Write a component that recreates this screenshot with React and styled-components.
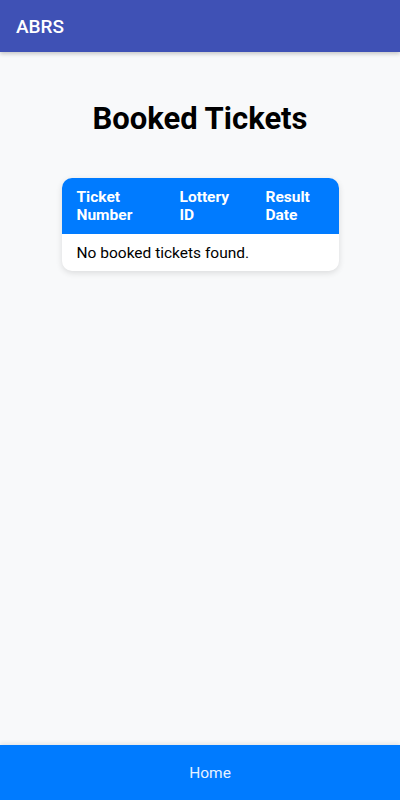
import React from 'react';
import styled, {createGlobalStyle} from 'styled-components';

const GlobalStyle = createGlobalStyle`
  html, body {
    margin: 0;
    padding: 0;
  }
  body {
    font-family: Roboto, "Liberation Sans", sans-serif;
    background-color: #f8f9fa;
  }
`;

const Page = styled.div`
  display: flex;
  flex-direction: column;
  height: 800px;
  background-color: #f8f9fa;
`;

const AppBar = styled.header`
  height: 52px;
  flex-shrink: 0;
  display: flex;
  align-items: center;
  padding: 0 16px;
  background-color: #3f51b5;
  color: #fff;
  font-size: 19px;
  font-weight: 500;
  box-shadow: 0 2px 4px rgba(0, 0, 0, 0.2);
  position: relative;
  z-index: 1;
`;

const Content = styled.main`
  flex: 1;
  display: flex;
  flex-direction: column;
  align-items: center;
  padding-top: 50px;
`;

const Title = styled.h1`
  margin: 0 0 42px 0;
  font-size: 31px;
  font-weight: 700;
  line-height: 34px;
  color: #000;
`;

const Card = styled.div`
  width: 277px;
  border-radius: 10px;
  overflow: hidden;
  background-color: #fff;
  box-shadow: 0 2px 6px rgba(0, 0, 0, 0.12);
`;

const Table = styled.table`
  width: 100%;
  border-collapse: collapse;
  table-layout: fixed;
`;

const HeadCell = styled.th`
  box-sizing: border-box;
  width: ${(props) => props.$width}px;
  background-color: #007bff;
  color: #fff;
  font-size: 15.5px;
  font-weight: 700;
  line-height: 18px;
  text-align: left;
  vertical-align: top;
  padding: 10px 15px 10px 15px;
`;

const Cell = styled.td`
  font-size: 15.5px;
  line-height: 18px;
  color: #000;
  padding: 10px 15px 9px;
`;

const Footer = styled.footer`
  height: 55px;
  flex-shrink: 0;
  display: flex;
  align-items: center;
  justify-content: center;
  padding-left: 20px;
  background-color: #007bff;
  box-shadow: 0 -2px 4px rgba(0, 0, 0, 0.08);
`;

const NavItem = styled.span`
  color: #e6f2ff;
  font-size: 15.5px;
`;

const columns = [
  {top: 'Ticket', bottom: 'Number', width: 103},
  {top: 'Lottery', bottom: 'ID', width: 86},
  {top: 'Result', bottom: 'Date', width: 88},
];

const App = () => {
  const tickets = [];

  return (
    <Page>
      <GlobalStyle />
      <AppBar>ABRS</AppBar>
      <Content>
        <Title>Booked Tickets</Title>
        <Card>
          <Table>
            <thead>
              <tr>
                {columns.map((col) => (
                  <HeadCell key={col.top} $width={col.width}>
                    {col.top}
                    <br />
                    {col.bottom}
                  </HeadCell>
                ))}
              </tr>
            </thead>
            <tbody>
              {tickets.length === 0 && (
                <tr>
                  <Cell colSpan={3}>No booked tickets found.</Cell>
                </tr>
              )}
            </tbody>
          </Table>
        </Card>
      </Content>
      <Footer>
        <NavItem>Home</NavItem>
      </Footer>
    </Page>
  );
};

export default App;
